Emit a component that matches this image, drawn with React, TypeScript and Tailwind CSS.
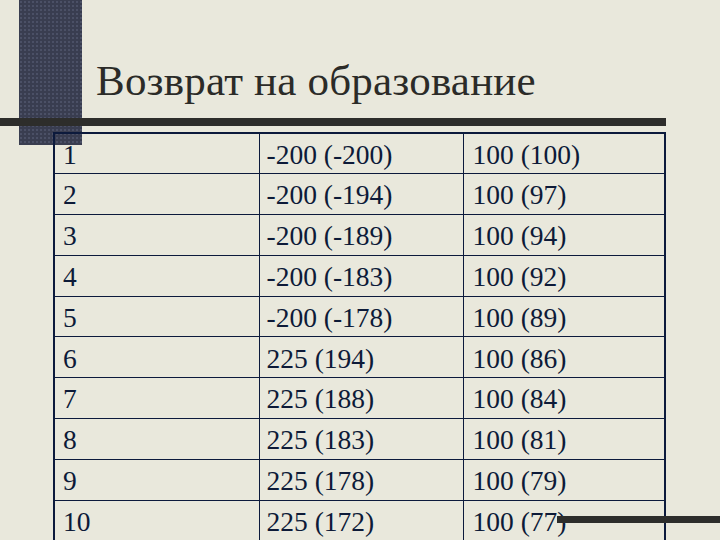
const rows: [string, string, string][] = [
  ["1", "-200 (-200)", "100 (100)"],
  ["2", "-200 (-194)", "100 (97)"],
  ["3", "-200 (-189)", "100 (94)"],
  ["4", "-200 (-183)", "100 (92)"],
  ["5", "-200 (-178)", "100 (89)"],
  ["6", "225 (194)", "100 (86)"],
  ["7", "225 (188)", "100 (84)"],
  ["8", "225 (183)", "100 (81)"],
  ["9", "225 (178)", "100 (79)"],
  ["10", "225 (172)", "100 (77)"],
];

export default function App() {
  return (
    <div className="relative w-[720px] h-[540px] overflow-hidden bg-[#e9e8dc] font-['Liberation_Serif',serif]">
      {/* decorative dotted bar sits over the header */}
      <div className="absolute left-[19px] top-0 w-[63px] h-[145px] bg-[#393d50] bg-[radial-gradient(circle,#4b5066_1px,transparent_1.2px)] bg-[length:4px_4px]" />

      <div className="relative flex flex-col">
        <div className="h-[118px] pt-[54px] pl-[96px]">
          <h1 className="text-[43px] leading-[54px] text-[#2b2b28] tracking-[0.2px]">
            Возврат на образование
          </h1>
        </div>
        <div className="w-[666px] h-[8px] bg-[#2d2d2b]" />

        <table className="mt-[6px] ml-[53px] w-[613px] border-collapse border-2 border-[#0c1a3c] text-[27.5px] text-[#0d1a38]">
          <tbody>
            {rows.map((r) => (
              <tr key={r[0]} className="h-[40.8px]">
                <td className="w-[205px] border border-[#0c1a3c] pl-[8px] pt-[2px] leading-none align-middle">{r[0]}</td>
                <td className="w-[204px] border border-[#0c1a3c] pl-[7px] pt-[2px] leading-none align-middle">{r[1]}</td>
                <td className="border border-[#0c1a3c] pl-[9px] pt-[2px] leading-none align-middle">{r[2]}</td>
              </tr>
            ))}
          </tbody>
        </table>
      </div>

      {/* rule that runs over the last cell */}
      <div className="absolute left-[557px] top-[516px] w-[163px] h-[7px] bg-[#2d2d2b]" />
    </div>
  );
}
